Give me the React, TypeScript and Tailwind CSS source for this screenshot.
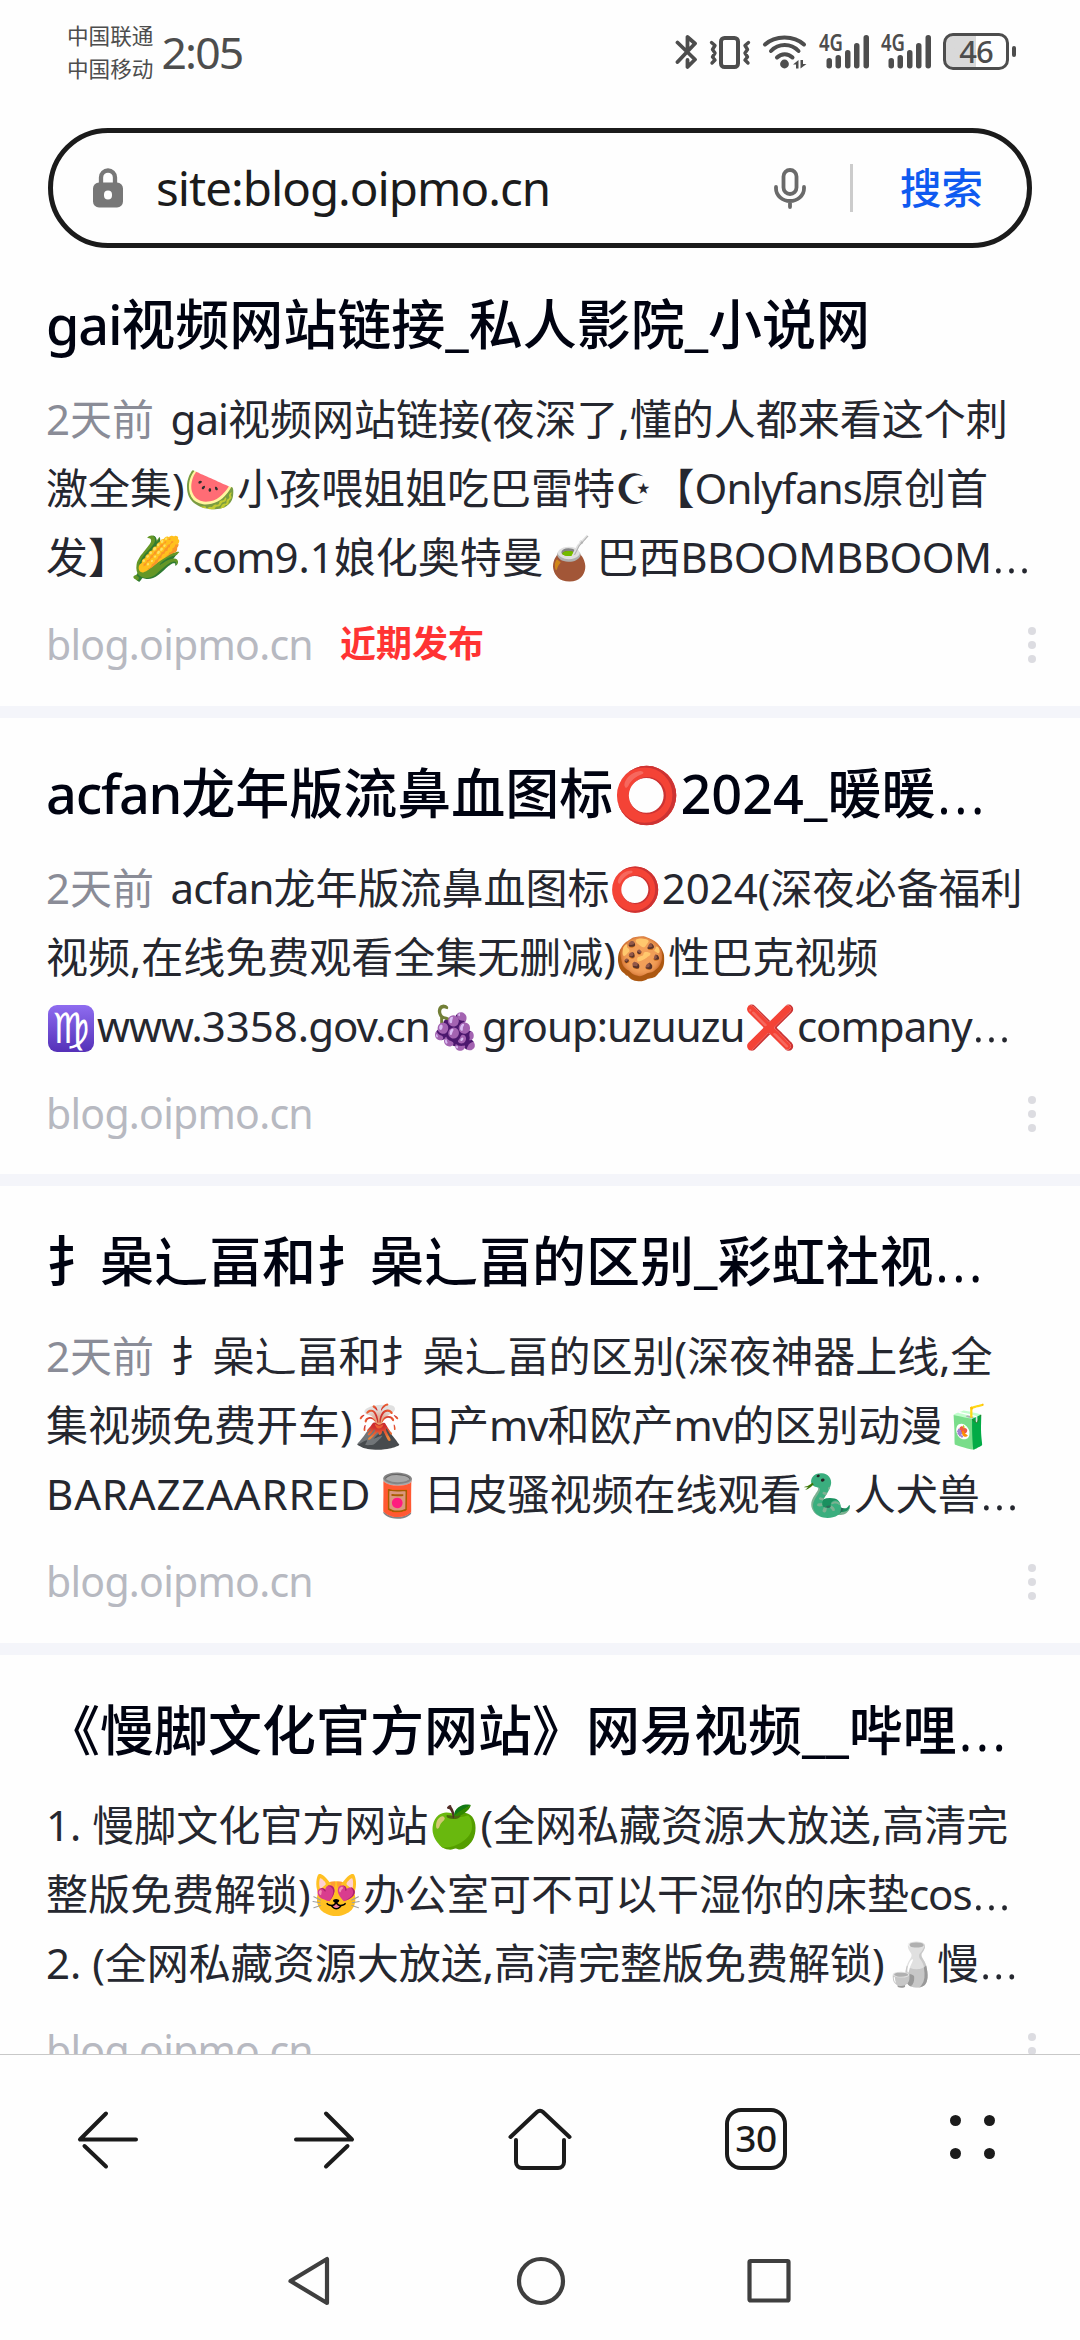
import React from 'react';

// ─── Types ────────────────────────────────────────────────────────────────────

interface Result {
  title: string;
  date?: string;
  lines: string[];
  recent?: boolean;
}

// ─── Data ─────────────────────────────────────────────────────────────────────

const DOMAIN = 'blog.oipmo.cn';

const RESULTS: Result[] = [
  {
    title: 'gai视频网站链接_私人影院_小说网',
    date: '2天前',
    lines: [
      'gai视频网站链接(夜深了,懂的人都来看这个刺',
      '激全集)🍉小孩喂姐姐吃巴雷特☪【Onlyfans原创首',
      '发】🌽.com9.1娘化奥特曼🧉巴西BBOOMBBOOM…',
    ],
    recent: true,
  },
  {
    title: 'acfan龙年版流鼻血图标⭕2024_暖暖…',
    date: '2天前',
    lines: [
      'acfan龙年版流鼻血图标⭕2024(深夜必备福利',
      '视频,在线免费观看全集无删减)🍪性巴克视频',
      '♍www.3358.gov.cn🍇group:uzuuzu❌company…',
    ],
  },
  {
    title: '扌喿辶畐和扌喿辶畐的区别_彩虹社视…',
    date: '2天前',
    lines: [
      '扌喿辶畐和扌喿辶畐的区别(深夜神器上线,全',
      '集视频免费开车)🌋日产mv和欧产mv的区别动漫🧃',
      'BARAZZAARRED🥫日皮骚视频在线观看🐍人犬兽…',
    ],
  },
  {
    title: '《慢脚文化官方网站》网易视频__哔哩…',
    lines: [
      '1. 慢脚文化官方网站🍏(全网私藏资源大放送,高清完',
      '整版免费解锁)😻办公室可不可以干湿你的床垫cos…',
      '2. (全网私藏资源大放送,高清完整版免费解锁)🍶慢…',
    ],
  },
];

// ─── Text helpers ─────────────────────────────────────────────────────────────

const PART_STYLES: Record<string, string> = {
  '…': 'text-[1.28em] leading-[0] font-light',
  '🧉': 'hue-rotate-[8deg] saturate-200',
  '🥫': 'hue-rotate-[-45deg] saturate-150 brightness-75',
  '🐍': 'hue-rotate-[75deg] brightness-75',
  '🍏': 'saturate-150 brightness-90',
  '🍶': 'grayscale',
};

function renderText(text: string) {
  return text.split(/(…|☪|♍|🧉|🥫|🐍|🍏|🍶|[A-Z]{3,}|[A-Za-z.:]{2,})/gu).map((part, i) => {
    if (PART_STYLES[part]) {
      return (
        <span key={i} className={PART_STYLES[part]}>
          {part}
        </span>
      );
    }
    if (part === '☪') {
      return (
        <span key={i} className="font-['DejaVu_Sans'] leading-none">
          {'☪\uFE0E'}
        </span>
      );
    }
    if (part === '♍') {
      return (
        <span
          key={i}
          className="mr-[3px] ml-[2px] inline-flex h-[47px] w-[46px] items-center justify-center rounded-[9px] bg-linear-to-b from-[#8f6cf0] to-[#5530b8] align-[-1px] font-['DejaVu_Sans'] text-[42px] leading-none text-white"
        >
          {'♍\uFE0E'}
        </span>
      );
    }
    if (/^[A-Z]{3,}$/.test(part)) {
      return (
        <span key={i} className={part.includes('A') ? 'tracking-[0.02em]' : 'tracking-[-0.012em]'}>
          {part}
        </span>
      );
    }
    if (/^[A-Za-z.:]{2,}$/.test(part)) {
      return (
        <span key={i} className="tracking-[-0.023em]">
          {part}
        </span>
      );
    }
    return <React.Fragment key={i}>{part}</React.Fragment>;
  });
}

// ─── Status bar ───────────────────────────────────────────────────────────────

function Signal() {
  return (
    <svg className="h-[40px] w-[54px] overflow-visible" viewBox="0 0 54 40" fill="#4d4d4d">
      <text x="0" y="19" fontSize="23" fontWeight="600" fontFamily="Noto Sans" textLength="24" lengthAdjust="spacingAndGlyphs">
        4G
      </text>
      <rect x="7.5" y="26" width="5.5" height="10.5" rx="2.7" />
      <rect x="16.5" y="23" width="5.5" height="13.5" rx="2.7" />
      <rect x="26" y="18" width="5.5" height="18.5" rx="2.7" />
      <rect x="35" y="11" width="5.5" height="25.5" rx="2.7" />
      <rect x="44.5" y="3" width="5.5" height="33.5" rx="2.7" />
    </svg>
  );
}

function StatusBar() {
  return (
    <div className="flex h-[128px] shrink-0 items-start text-[#4d4d4d]">
      <div className="ml-[67px] mt-[19px] text-[21.6px] leading-[33px]">
        <p>中国联通</p>
        <p>中国移动</p>
      </div>
      <p className="ml-[8px] mt-[21px] text-[44.5px] leading-[62px] tracking-[-1.8px]">2:05</p>
      <div className="ml-auto mt-[32px] mr-[64px] flex items-start">
        {/* Bluetooth */}
        <svg className="h-[40px] w-[24px]" viewBox="0 0 24 40" fill="none" stroke="#4d4d4d" strokeWidth="3.8" strokeLinejoin="round" strokeLinecap="round">
          <path d="M2.500 10.500 20 27.500 12.500 35V28M2.500 30 20 11.500 12.500 5V20" />
        </svg>
        {/* Vibrate */}
        <svg className="ml-[10px] h-[40px] w-[44px]" viewBox="0 0 44 40" fill="none" stroke="#4d4d4d" strokeLinejoin="round" strokeLinecap="round">
          <rect x="12" y="6" width="17" height="29" rx="3.500" strokeWidth="4" />
          <path d="M2.500 10.500l3.500 3-2.500 4 2.500 3.500-2.500 4 2.500 3-3 3M39.500 10.500l-3.500 3 2.500 4-2.500 3.500 2.500 4-2.500 3 3 3" strokeWidth="3.400" />
        </svg>
        {/* Wi-Fi with traffic arrows */}
        <svg className="ml-[9px] h-[40px] w-[46px]" viewBox="0 0 46 40" fill="none" stroke="#4d4d4d" strokeWidth="4" strokeLinecap="round">
          <path d="M3 12.500C13 3 32 3 42 12.500M9 19c7.500-8 20-8 27.500 0M15 25.500c4.500-4.500 11-4.500 15.500 0" />
          <circle cx="22.500" cy="32" r="4.400" fill="#4d4d4d" stroke="none" />
          <path d="M36.500 28v8.500h-2.500v-4H31zM38.500 36.500V28H41v4h3.500z" fill="#4d4d4d" stroke="none" />
        </svg>
        <div className="ml-[11px] flex gap-[8px]">
          <Signal />
          <Signal />
        </div>
        <div className="ml-[8px] mt-[1px] flex items-center">
          <div className="flex h-[37px] w-[66px] items-center justify-center rounded-[10px] border-[3px] border-[#4d4d4d] bg-linear-to-r from-[#d9d9d9] from-50% to-transparent to-50% text-[31px] leading-none font-medium tracking-[-1px]">
            46
          </div>
          <div className="ml-[3px] h-[11px] w-[4px] rounded-full bg-[#4d4d4d]" />
        </div>
      </div>
    </div>
  );
}

// ─── Search box ───────────────────────────────────────────────────────────────

function SearchBox() {
  return (
    <div className="mx-[48px] flex h-[120px] shrink-0 items-center rounded-full border-[5px] border-[#1b1b1b]">
      <svg className="ml-[40px] h-[40px] w-[30px]" viewBox="0 0 30 40">
        <path d="M8 16V9.500a7 7 0 0 1 14 0V16" fill="none" stroke="#777" strokeWidth="4.300" />
        <path fillRule="evenodd" fill="#777" d="M6 14.500h18a6 6 0 0 1 6 6V33.500a6 6 0 0 1-6 6H6a6 6 0 0 1-6-6V20.500a6 6 0 0 1 6-6zM15 22.500a4 4 0 0 0-4 4v1a4 4 0 0 0 8 0v-1a4 4 0 0 0-4-4z" />
      </svg>
      <p className="ml-[33px] text-[47.500px] leading-[60px] tracking-[-0.021em] text-[#1b1b1b]">site:{DOMAIN}</p>
      <svg className="ml-auto h-[42px] w-[34px]" viewBox="0 0 34 42" fill="none" stroke="#6a6a6a" strokeWidth="3.800" strokeLinecap="round">
        <rect x="10.500" y="3" width="13" height="24" rx="6.500" />
        <path d="M3 20v1.500a14 12.500 0 0 0 28 0V20M17 34.500V40" />
      </svg>
      <div className="ml-[43px] h-[48px] w-[3px] bg-[#ccc]" />
      <p className="mr-[44px] ml-[47px] text-[41.500px] leading-[60px] font-medium text-[#0f5af0]">搜索</p>
    </div>
  );
}

// ─── Result card ──────────────────────────────────────────────────────────────

function ResultCard({ result }: { result: Result }) {
  return (
    <div className="h-[468.6px] shrink-0 border-b-[12px] border-[#f4f5fa] pl-[46px] pr-[44px] pt-[39px] whitespace-nowrap">
      <h3 className="h-[72px] text-[54px] leading-[72px] font-medium text-[#000311]">{renderText(result.title)}</h3>
      <div className="mt-[24px] text-[42px] text-[#25272f]">
        {result.lines.map((line, i) => (
          <p key={line} className="h-[69px] leading-[69px]">
            {i === 0 && result.date && <span className="mr-[16.5px] text-[#8a8c97]">{result.date}</span>}
            {renderText(line)}
          </p>
        ))}
      </div>
      <div className="mt-[23px] flex h-[60px] items-center">
        <span className="text-[41px] leading-[60px] tracking-[-0.018em] text-[#b7b9c1]">{DOMAIN}</span>
        {result.recent && <span className="ml-[27px] text-[36px] leading-[60px] font-bold text-[#ff3333]">近期发布</span>}
        <div className="ml-auto flex flex-col gap-[6px] pt-[2px]">
          <i className="size-[8px] rounded-full bg-[#dcdce1]" />
          <i className="size-[8px] rounded-full bg-[#dcdce1]" />
          <i className="size-[8px] rounded-full bg-[#dcdce1]" />
        </div>
      </div>
    </div>
  );
}

// ─── Bottom bars ──────────────────────────────────────────────────────────────

function BrowserBar() {
  return (
    <div className="grid h-[170px] shrink-0 grid-cols-5 place-items-center border-t border-[#c8c8c8] pb-[2px] text-[#1b1b1b]">
      <svg className="size-[72px]" viewBox="0 0 72 72" fill="none" stroke="currentColor" strokeWidth="4" strokeLinecap="round" strokeLinejoin="round">
        <path d="M34 10.500 8 36.500H64M12.500 43 34 63.500" />
      </svg>
      <svg className="size-[72px]" viewBox="0 0 72 72" fill="none" stroke="currentColor" strokeWidth="4" strokeLinecap="round" strokeLinejoin="round">
        <path d="M38 10.500 64 36.500H8M59.500 43 38 63.500" />
      </svg>
      <svg className="size-[72px]" viewBox="0 0 72 72" fill="none" stroke="currentColor" strokeWidth="4" strokeLinecap="round" strokeLinejoin="round">
        <path d="M6.500 34 33 9a4.500 4.500 0 0 1 6 0L65.500 34M12 37V59a6 6 0 0 0 6 6H54a6 6 0 0 0 6-6V37" />
      </svg>
      <div className="flex size-[62px] items-center justify-center rounded-[16px] border-[4px] border-current pb-[3px] text-[37px] leading-none font-medium tracking-[-0.5px]">30</div>
      <div className="mb-[4px] grid grid-cols-2 gap-x-[23px] gap-y-[22px]">
        <i className="size-[11px] rounded-full bg-current" />
        <i className="size-[11px] rounded-full bg-current" />
        <i className="size-[11px] rounded-full bg-current" />
        <i className="size-[11px] rounded-full bg-current" />
      </div>
    </div>
  );
}

function SystemNav() {
  return (
    <div className="flex h-[116px] shrink-0 items-center justify-between pr-[288px] pb-[2px] pl-[286px]">
      <svg className="size-[50px]" viewBox="0 0 50 50" fill="none" stroke="#3f3f3f" strokeWidth="4.200" strokeLinejoin="round">
        <path d="M41 3V47L4.500 25z" />
      </svg>
      <svg className="size-[50px]" viewBox="0 0 50 50" fill="none" stroke="#3f3f3f" strokeWidth="4.200">
        <circle cx="25" cy="25" r="22" />
      </svg>
      <svg className="size-[46px]" viewBox="0 0 46 46" fill="none" stroke="#3f3f3f" strokeWidth="4.200" strokeLinejoin="round">
        <rect x="3.500" y="3" width="39" height="39.500" rx="1" />
      </svg>
    </div>
  );
}

// ─── App ──────────────────────────────────────────────────────────────────────

export default function App() {
  return (
    <div className="flex h-[2340px] w-[1080px] flex-col overflow-hidden bg-[#fefefe] font-['Noto_Sans','Noto_Sans_CJK_SC','Noto_Color_Emoji',sans-serif]">
      <StatusBar />
      <SearchBox />
      <main className="flex min-h-0 flex-1 flex-col overflow-hidden pt-[1px]">
        {RESULTS.map((result) => (
          <ResultCard key={result.title} result={result} />
        ))}
      </main>
      <BrowserBar />
      <SystemNav />
    </div>
  );
}
